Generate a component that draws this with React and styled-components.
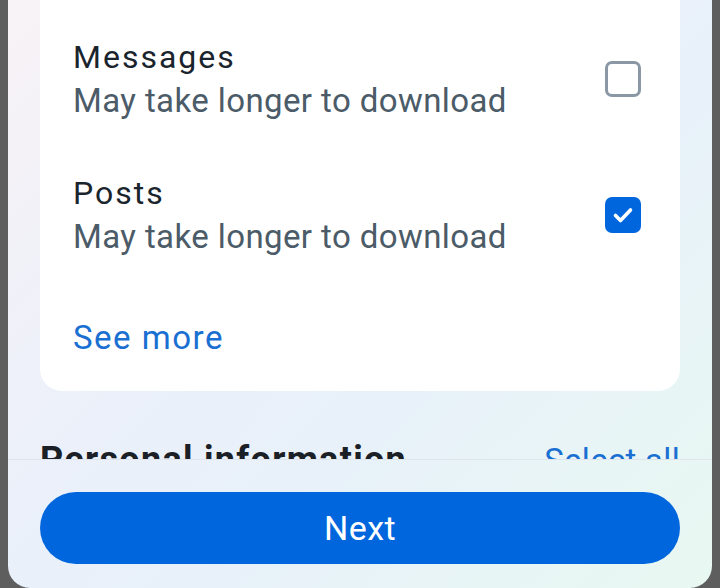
import React from "react";
import styled, { createGlobalStyle } from "styled-components";

const Global = createGlobalStyle`
  html, body { margin: 0; padding: 0; background: #5e5e5e; }
  body { font-family: Roboto, "Noto Sans", sans-serif; -webkit-font-smoothing: antialiased; }
  * { box-sizing: border-box; }
`;

const Sheet = styled.div`
  margin: 0 8px;
  height: 588px;
  display: flex;
  flex-direction: column;
  overflow: hidden;
  border-radius: 0 0 22px 22px;
  background:
    linear-gradient(135deg, #f8f3f6 0%, #ebf0fa 40%, #e8f1fa 60%, #e8f8f1 100%);
`;

const Scroll = styled.div`
  flex: 1;
  overflow: hidden;
  padding: 0 32px;
`;

const Card = styled.div`
  background: #ffffff;
  border-radius: 0 0 22px 22px;
  padding: 35px 39px 31px 33px;
  display: flex;
  flex-direction: column;
`;

const Row = styled.div`
  display: flex;
  align-items: center;
  justify-content: space-between;
  margin-bottom: ${(p) => p.$gap || 0}px;
`;

const Texts = styled.div`
  display: flex;
  flex-direction: column;
`;

const Title = styled.div`
  font-size: 32px;
  letter-spacing: 2px;
  line-height: 44px;
  color: #1a242c;
`;

const Sub = styled.div`
  font-size: 33px;
  letter-spacing: 0.4px;
  line-height: 44px;
  color: #4c5b68;
`;

const Box = styled.div`
  width: 36px;
  height: 36px;
  border-radius: 7px;
  display: flex;
  align-items: center;
  justify-content: center;
  border: ${(p) => (p.$checked ? "none" : "3px solid #8a97a4")};
  background: ${(p) => (p.$checked ? "#0066de" : "#ffffff")};
`;

const Link = styled.div`
  font-size: 33px;
  letter-spacing: ${(p) => p.$ls || 0}px;
  line-height: 44px;
  color: #1a6fd2;
`;

const SectionHead = styled.div`
  margin-top: 47px;
  display: flex;
  justify-content: space-between;
  align-items: baseline;
`;

const HeadText = styled.div`
  font-size: 36px;
  letter-spacing: 1.3px;
  line-height: 44px;
  font-weight: 700;
  color: #1a2026;
`;

const Footer = styled.div`
  border-top: 1px solid #dfe5ea;
  padding: 32px 32px 24px;
`;

const NextButton = styled.button`
  width: 100%;
  height: 72px;
  border: none;
  border-radius: 36px;
  background: #0066de;
  color: #ffffff;
  font-family: Roboto, sans-serif;
  font-size: 34px;
  letter-spacing: 0.4px;
  display: flex;
  align-items: center;
  justify-content: center;
  padding: 0;
`;

const Check = () => (
  <svg width="24" height="24" viewBox="0 0 24 24" fill="none">
    <path d="M4.5 12.5l5 5 10-10.5" stroke="#fff" strokeWidth="3.6" strokeLinecap="round" strokeLinejoin="round" />
  </svg>
);

const Option = ({ title, sub, checked, gap }) => (
  <Row $gap={gap}>
    <Texts>
      <Title>{title}</Title>
      <Sub>{sub}</Sub>
    </Texts>
    <Box $checked={checked}>{checked && <Check />}</Box>
  </Row>
);

export default function App() {
  return (
    <>
      <Global />
      <Sheet>
        <Scroll>
          <Card>
            <Option title="Messages" sub="May take longer to download" gap={48} />
            <Option title="Posts" sub="May take longer to download" checked gap={57} />
            <Link $ls={1.5}>See more</Link>
          </Card>
          <SectionHead>
            <HeadText>Personal information</HeadText>
            <Link $ls={0.3}>Select all</Link>
          </SectionHead>
        </Scroll>
        <Footer>
          <NextButton>Next</NextButton>
        </Footer>
      </Sheet>
    </>
  );
}
